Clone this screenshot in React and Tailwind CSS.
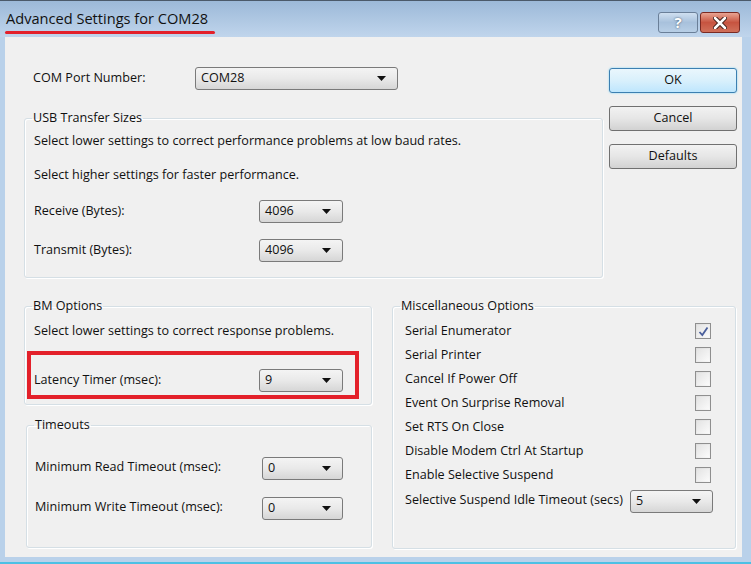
import React from 'react';

const font = { fontFamily: '"Open Sans", "Liberation Sans", sans-serif' };

const Combo = ({ value, className = '' }) => (
  <div
    className={`h-[23px] flex items-center justify-between pl-[5px] pr-[11px] border border-[#7a7a7a] rounded-[3px] bg-gradient-to-b from-[#f4f4f4] via-[#e9e9e9] to-[#d6d6d6] text-[12.6px] text-[#111] ${className}`}
  >
    <span>{value}</span>
    <svg width="9" height="5" viewBox="0 0 9 5">
      <path d="M0 0 H9 L4.5 5 Z" fill="#111" />
    </svg>
  </div>
);

const Check = ({ checked }) => (
  <div className="w-[16px] h-[16px] border border-[#8f8f8f] bg-gradient-to-br from-[#dcdcdc] to-[#f8f8f8] flex items-center justify-center">
    <div className="w-[12px] h-[12px] bg-gradient-to-br from-[#e4e4e4] to-[#fafafa] flex items-center justify-center">
      {checked && (
        <svg width="11" height="11" viewBox="0 0 11 11">
          <path d="M1.5 6 L4.3 9 L9.5 1.5" stroke="#4a5f9c" strokeWidth="1.8" fill="none" />
        </svg>
      )}
    </div>
  </div>
);

const Group = ({ title, className = '', children }) => (
  <fieldset
    className={`border border-[#d5dfe5] rounded-[3px] shadow-[inset_1px_1px_0_#ffffff,1px_1px_0_#ffffff] ${className}`}
  >
    <legend className="ml-[7px] px-[1px] text-[12.6px] leading-[16px] text-[#111]">{title}</legend>
    {children}
  </fieldset>
);

const Button = ({ label, primary }) => (
  <button
    className={`h-[25px] w-full rounded-[3px] text-[12.6px] text-[#111] border ${
      primary
        ? 'border-[#3c7fb1] bg-gradient-to-b from-[#eaf6fd] via-[#d9f0fc] to-[#bee6fd] shadow-[0_0_2px_#6fd0f5]'
        : 'border-[#707070] bg-gradient-to-b from-[#f2f2f2] via-[#e6e6e6] to-[#d2d2d2]'
    }`}
  >
    {label}
  </button>
);

const miscOptions = [
  ['Serial Enumerator', true],
  ['Serial Printer', false],
  ['Cancel If Power Off', false],
  ['Event On Surprise Removal', false],
  ['Set RTS On Close', false],
  ['Disable Modem Ctrl At Startup', false],
  ['Enable Selective Suspend', false],
];

export default function App() {
  return (
    <div className="w-[751px] h-[564px] flex flex-col bg-[#b9d1ea] overflow-hidden" style={font}>
      {/* title bar */}
      <div className="h-[37px] flex items-start bg-gradient-to-b from-[#9cb9d8] to-[#c0d5ec] border-t border-[#4b5a6a]">
        <div className="ml-[6px] mt-[7px] flex flex-col">
          <span className="text-[14.6px] leading-[21px] text-[#111]">Advanced Settings for COM28</span>
          <div className="mt-[2px] -ml-[1px] w-[210px] h-[3px] rounded-full bg-[#e3202a]" />
        </div>
        <div className="ml-auto mr-[11px] mt-[11px] flex">
          <div className="w-[40px] h-[21px] rounded-[3px] border border-[#6a7f98] bg-gradient-to-b from-[#cfdff0] via-[#a8c1dc] to-[#b8cfe6] flex items-center justify-center text-[15px] font-bold text-white [text-shadow:0_0_2px_#30435a]">
            ?
          </div>
          <div className="ml-[2px] w-[40px] h-[21px] rounded-[3px] border border-[#7a2a22] bg-gradient-to-b from-[#e8a493] via-[#c75440] to-[#d0705a] flex items-center justify-center">
            <svg width="14" height="12" viewBox="0 0 14 12">
              <path d="M2 1 L12 11 M12 1 L2 11" stroke="#3a1a14" strokeWidth="4.5" strokeLinecap="round" />
              <path d="M2 1 L12 11 M12 1 L2 11" stroke="#ffffff" strokeWidth="2.5" strokeLinecap="round" />
            </svg>
          </div>
        </div>
      </div>

      {/* body */}
      <div className="flex h-[520px]">
        <div className="w-[5px]" />
        <div className="w-[737px] bg-[#f0f0f0] pl-[19px] text-[12.6px] text-[#111]">
          {/* top section */}
          <div className="flex mt-[30px]">
            <div className="w-[579px]">
              <div className="h-[23px] flex items-center">
                <div className="w-[171px] pl-[9px]">COM Port Number:</div>
                <Combo value="COM28" className="w-[203px]" />
              </div>
              <Group title="USB Transfer Sizes" className="mt-[20px] pb-[15px]">
                <div className="pl-[9px] mt-[7px] leading-[16px]">
                  Select lower settings to correct performance problems at low baud rates.
                </div>
                <div className="pl-[9px] mt-[18px] leading-[16px]">Select higher settings for faster performance.</div>
                <div className="flex items-center mt-[17px]">
                  <div className="w-[234px] pl-[9px]">Receive (Bytes):</div>
                  <Combo value="4096" className="w-[84px]" />
                </div>
                <div className="flex items-center mt-[16px]">
                  <div className="w-[234px] pl-[9px]">Transmit (Bytes):</div>
                  <Combo value="4096" className="w-[84px]" />
                </div>
              </Group>
            </div>
            <div className="ml-[6px] w-[128px] flex flex-col gap-[13px] mt-[1px]">
              <Button label="OK" primary />
              <Button label="Cancel" />
              <Button label="Defaults" />
            </div>
          </div>

          {/* bottom section */}
          <div className="flex mt-[20px] gap-[20px]">
            <div className="w-[348px]">
              <Group title="BM Options" className="pb-[5px]">
                <div className="pl-[9px] mt-[9px] leading-[16px]">Select lower settings to correct response problems.</div>
                <div className="ml-[2px] mt-[12px] w-[332px] border-4 border-[#e3202a] pt-[14px] pb-[3px] flex items-center">
                  <div className="w-[228px] pl-[3px]">Latency Timer (msec):</div>
                  <Combo value="9" className="w-[84px]" />
                </div>
              </Group>
              <Group title="Timeouts" className="ml-[2px] mt-[12px] pb-[27px]">
                <div className="flex items-center mt-[24px]">
                  <div className="w-[235px] pl-[8px] -mt-[3px]">Minimum Read Timeout (msec):</div>
                  <Combo value="0" className="w-[81px]" />
                </div>
                <div className="flex items-center mt-[17px]">
                  <div className="w-[235px] pl-[8px] -mt-[3px]">Minimum Write Timeout (msec):</div>
                  <Combo value="0" className="w-[81px]" />
                </div>
              </Group>
            </div>
            <Group title="Miscellaneous Options" className="w-[344px] pb-[35px]">
              <div className="mt-[5px]">
                {miscOptions.map(([label, checked]) => (
                  <div key={label} className="h-[24px] flex items-center justify-between pl-[12px] pr-[24px]">
                    <span>{label}</span>
                    <Check checked={checked} />
                  </div>
                ))}
              </div>
              <div className="mt-[3px] flex items-center justify-between pl-[12px] pr-[22px]">
                <span className="-mt-[2px]">Selective Suspend Idle Timeout (secs)</span>
                <Combo value="5" className="w-[83px]" />
              </div>
            </Group>
          </div>
        </div>
        <div className="flex-1" />
      </div>
      <div className="h-[5px]" />
      <div className="flex-1 bg-[#4cc0e4]" />
    </div>
  );
}
